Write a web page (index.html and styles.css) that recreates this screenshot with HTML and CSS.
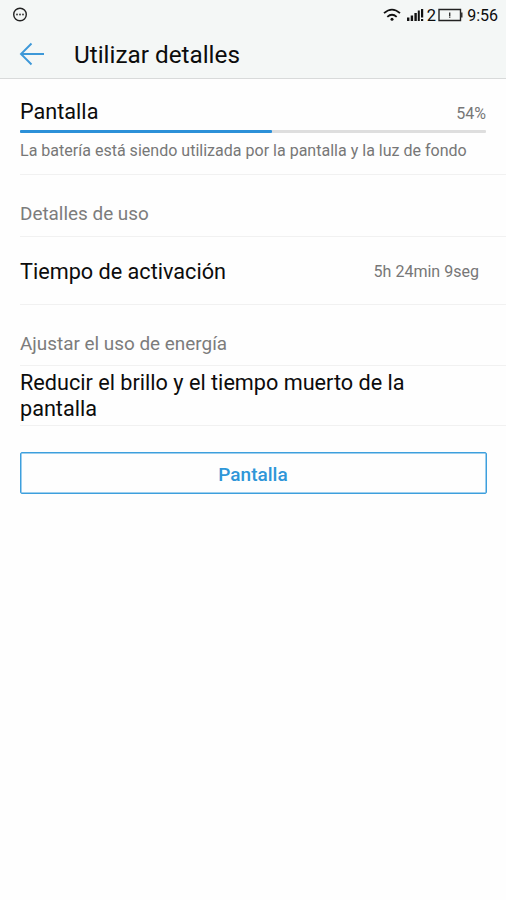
FILE: index.html
```html
<!DOCTYPE html>
<html lang="es">
<head>
<meta charset="utf-8">
<title>Utilizar detalles</title>
<link rel="stylesheet" href="styles.css">
</head>
<body>
<header class="top">
  <div class="status">
    <svg class="notice" width="16" height="16" viewBox="0 0 16 16"><circle cx="8" cy="7.500" r="6.300" fill="none" stroke="#222" stroke-width="1.400"/><g fill="#333"><circle cx="5" cy="7.500" r=".9"/><circle cx="8" cy="7.500" r=".9"/><circle cx="11" cy="7.500" r=".9"/></g></svg>
    <svg class="wifi" width="18" height="14" viewBox="0 0 18 14"><g fill="none" stroke="#111" stroke-width="1.800"><path d="M1 5.200Q9-2 17 5.200"/><path d="M4.300 8.800Q9 4.600 13.700 8.800"/></g><circle cx="9" cy="11.300" r="1.500" fill="#111"/></svg>
    <svg class="signal" width="17" height="14" viewBox="0 0 17 14"><path d="M0 9.500h2.400V13H0zM3.700 7.500h2.400V13H3.700zM7.400 5h2.400v8H7.400zM10.800 2.500h2V13h-2zM14 1h2.200v8.500H14zM14 11h2.200v2H14z" fill="#111"/></svg>
    <span class="sim">2</span>
    <svg class="battery" width="25" height="14" viewBox="0 0 25 14"><path d="M1 1.500h21.500v11H1z" fill="none" stroke="#222" stroke-width="1.400"/><path d="M22.500 4.500H24.500v5h-2zM11 4.500h1.400v3.500H11zM11 8.500h1.400v1.200H11z" fill="#333"/></svg>
    <span class="clock">9:56</span>
  </div>
  <div class="bar">
    <svg class="back" width="26" height="24" viewBox="0 0 26 24"><path d="M25 12H2M12.500 1.500L2 12l10.500 10.500" fill="none" stroke="#3d98d8" stroke-width="1.900"/></svg>
    <h1>Utilizar detalles</h1>
  </div>
</header>
<main>
  <section class="usage">
    <div class="line"><h2>Pantalla</h2><span class="percent">54%</span></div>
    <div class="track"><div class="fill" style="width:54%"></div></div>
    <p class="note">La batería está siendo utilizada por la pantalla y la luz de fondo</p>
  </section>
  <h3 class="details">Detalles de uso</h3>
  <div class="row"><span class="label">Tiempo de activación</span><span class="value">5h 24min 9seg</span></div>
  <h3 class="adjust">Ajustar el uso de energía</h3>
  <p class="advice">Reducir el brillo y el tiempo muerto de la pantalla</p>
  <button class="action">Pantalla</button>
</main>
</body>
</html>
```
FILE: styles.css
```css
* { box-sizing: border-box; margin: 0; padding: 0; }
body { width: 506px; height: 900px; overflow: hidden; background: #fefefe; color: #0c0c0c; font-family: Roboto, sans-serif; }
h1, h2, h3 { font-weight: 400; }
svg { display: block; flex: none; }
.top { height: 79px; background: #f4f7f6; border-bottom: 1px solid #d8dada; }
.status { display: flex; align-items: center; height: 30px; padding: 0 8px 0 12px; }
.wifi { margin-left: auto; }
.signal { margin-left: 6px; }
.sim { margin-left: 3px; font-size: 16.5px; }
.battery { margin-left: 2px; }
.clock { margin-left: 4px; font-size: 16px; }
.bar { display: flex; align-items: center; height: 48px; padding-left: 19px; }
h1 { margin-left: 29px; padding-top: 2px; font-size: 24.3px; line-height: 48px; }
.usage { height: 96px; margin-left: 20px; padding: 20px 20px 0 0; border-bottom: 1px solid #f1f1f1; }
.line { display: flex; justify-content: space-between; align-items: baseline; height: 31px; line-height: 26px; }
h2, .label, .advice { font-size: 21.65px; }
.percent, .value, .note { font-size: 16.05px; color: #777; }
.track { height: 3px; background: #dedede; border-radius: 1px; }
.fill { height: 3px; background: #2c90d8; border-radius: 1px; }
.note { margin-top: 8px; line-height: 20px; white-space: nowrap; }
h3 { margin-left: 20px; font-size: 18.9px; color: #7c7c7c; border-bottom: 1px solid #f1f1f1; }
.details { height: 62px; padding-top: 27px; line-height: 23px; }
.row { display: flex; justify-content: space-between; align-items: center; height: 68px; margin-left: 20px; padding: 1px 27px 0 0; border-bottom: 1px solid #f1f1f1; }
.adjust { height: 61px; padding-top: 27px; line-height: 23px; }
.advice { height: 60px; margin-left: 20px; padding: 4px 80px 0 0; line-height: 26px; border-bottom: 1px solid #f1f1f1; }
.action { display: block; width: 467px; height: 42px; margin: 26px 0 0 20px; padding: 2px 1px 0 0; border: 1px solid #3d9fdd; box-shadow: inset 0 0 0 .5px #3d9fdd; border-radius: 2px; background: transparent; color: #2f96d8; font: 500 19px Roboto, sans-serif; }
```
